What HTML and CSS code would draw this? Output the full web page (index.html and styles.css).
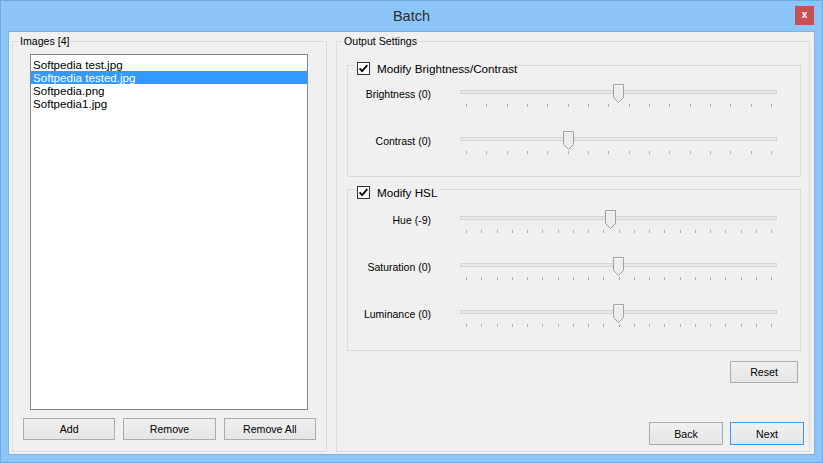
FILE: index.html
```html
<!DOCTYPE html>
<html>
<head>
<meta charset="utf-8">
<title>Batch</title>
<link rel="stylesheet" href="styles.css">
</head>
<body>
<div class="window">
  <div class="titlebar">
    <div class="title">Batch</div>
    <div class="close">x</div>
  </div>
  <div class="client">
    <section class="group images">
      <div class="group-title">Images [4]</div>
      <div class="listbox">
        <div class="item">Softpedia test.jpg</div>
        <div class="item sel">Softpedia tested.jpg</div>
        <div class="item">Softpedia.png</div>
        <div class="item">Softpedia1.jpg</div>
      </div>
      <div class="btnrow">
        <button class="btn">Add</button>
        <button class="btn">Remove</button>
        <button class="btn">Remove All</button>
      </div>
    </section>
    <section class="group output">
      <div class="group-title">Output Settings</div>

      <div class="box bc">
        <div class="box-title">
          <svg class="check" viewBox="0 0 13 13"><rect x="0.5" y="0.5" width="12" height="12" fill="#fff" stroke="#333"/><path d="M2.6 6.4L5.1 9.2L10.3 3.2" fill="none" stroke="#000" stroke-width="1.8"/></svg>
          <span>Modify Brightness/Contrast</span>
        </div>
        <div class="row">
          <div class="label">Brightness (0)</div>
          <div class="slider">
            <div class="track"></div>
            <div class="ticks"><span></span><span></span><span></span><span></span><span></span><span></span><span></span><span></span><span></span><span></span><span></span><span></span><span></span><span></span><span></span><span></span></div>
            <svg class="thumb" style="left:153px" viewBox="0 0 11 19"><path d="M0.5 0.5H10.5V13.5L5.5 18.5L0.5 13.5Z" fill="#ececec" stroke="#a0a0a0"/><path d="M1.5 1.5H9.5" stroke="#fafafa"/></svg>
          </div>
        </div>
        <div class="row">
          <div class="label">Contrast (0)</div>
          <div class="slider">
            <div class="track"></div>
            <div class="ticks"><span></span><span></span><span></span><span></span><span></span><span></span><span></span><span></span><span></span><span></span><span></span><span></span><span></span><span></span><span></span><span></span></div>
            <svg class="thumb" style="left:103px" viewBox="0 0 11 19"><path d="M0.5 0.5H10.5V13.5L5.5 18.5L0.5 13.5Z" fill="#ececec" stroke="#a0a0a0"/><path d="M1.5 1.5H9.5" stroke="#fafafa"/></svg>
          </div>
        </div>
      </div>

      <div class="box hsl">
        <div class="box-title">
          <svg class="check" viewBox="0 0 13 13"><rect x="0.5" y="0.5" width="12" height="12" fill="#fff" stroke="#333"/><path d="M2.6 6.4L5.1 9.2L10.3 3.2" fill="none" stroke="#000" stroke-width="1.8"/></svg>
          <span>Modify HSL</span>
        </div>
        <div class="row">
          <div class="label">Hue (-9)</div>
          <div class="slider">
            <div class="track"></div>
            <div class="ticks"><span></span><span></span><span></span><span></span><span></span><span></span><span></span><span></span><span></span><span></span><span></span><span></span><span></span><span></span><span></span><span></span><span></span><span></span><span></span><span></span><span></span></div>
            <svg class="thumb" style="left:145px" viewBox="0 0 11 19"><path d="M0.5 0.5H10.5V13.5L5.5 18.5L0.5 13.5Z" fill="#ececec" stroke="#a0a0a0"/><path d="M1.5 1.5H9.5" stroke="#fafafa"/></svg>
          </div>
        </div>
        <div class="row">
          <div class="label">Saturation (0)</div>
          <div class="slider">
            <div class="track"></div>
            <div class="ticks"><span></span><span></span><span></span><span></span><span></span><span></span><span></span><span></span><span></span><span></span><span></span><span></span><span></span><span></span><span></span><span></span><span></span><span></span><span></span><span></span><span></span></div>
            <svg class="thumb" style="left:153px" viewBox="0 0 11 19"><path d="M0.5 0.5H10.5V13.5L5.5 18.5L0.5 13.5Z" fill="#ececec" stroke="#a0a0a0"/><path d="M1.5 1.5H9.5" stroke="#fafafa"/></svg>
          </div>
        </div>
        <div class="row">
          <div class="label">Luminance (0)</div>
          <div class="slider">
            <div class="track"></div>
            <div class="ticks"><span></span><span></span><span></span><span></span><span></span><span></span><span></span><span></span><span></span><span></span><span></span><span></span><span></span><span></span><span></span><span></span><span></span><span></span><span></span><span></span><span></span></div>
            <svg class="thumb" style="left:153px" viewBox="0 0 11 19"><path d="M0.5 0.5H10.5V13.5L5.5 18.5L0.5 13.5Z" fill="#ececec" stroke="#a0a0a0"/><path d="M1.5 1.5H9.5" stroke="#fafafa"/></svg>
          </div>
        </div>
      </div>

      <button class="btn reset">Reset</button>

      <div class="navrow">
        <button class="btn nav">Back</button>
        <button class="btn nav default">Next</button>
      </div>
    </section>
  </div>
</div>
</body>
</html>
```
FILE: styles.css
```css
* { box-sizing: border-box; }

body {
  margin: 0;
  background: #8cc6f8;
}

.window {
  width: 823px;
  height: 463px;
  border: 1px solid #6fa9df;
  background: #8cc6f8;
  display: flex;
  flex-direction: column;
  font-family: "Liberation Sans", Arial, sans-serif;
  color: #000;
}

.titlebar {
  height: 30px;
  flex: none;
  display: grid;
  grid-template-columns: 1fr auto 1fr;
}

.title {
  grid-column: 2;
  font-size: 14.5px;
  line-height: 30px;
  color: #2e2e2e;
}

.close {
  grid-column: 3;
  justify-self: end;
  margin: 5px 8px 0 0;
  width: 19px;
  height: 19px;
  background: #c75050;
  color: #fff;
  font-weight: bold;
  font-size: 10px;
  line-height: 17px;
  text-align: center;
}

.client {
  flex: 1;
  margin: 0 7px 7px;
  border: 1px solid #7db3e4;
  background: #f0f0f0;
  display: grid;
  grid-template-columns: 315px 474px;
  column-gap: 9px;
  padding: 9px 4px 2px 3px;
}

.group {
  border: 1px solid #dcdcdc;
  position: relative;
}

.group-title {
  position: absolute;
  top: -7px;
  left: 6px;
  padding: 0 1px;
  background: #f0f0f0;
  font-size: 10.6px;
  line-height: 13px;
}

.images {
  display: flex;
  flex-direction: column;
  padding: 12px 0 11px;
}

.listbox {
  flex: 1;
  margin: 0 18px 8px 17px;
  border: 1px solid #828790;
  background: #fff;
  padding-top: 3px;
}

.item {
  height: 13px;
  line-height: 13px;
  padding-left: 2px;
  font-size: 11.6px;
  white-space: nowrap;
}

.item.sel {
  background: #3399ff;
  color: #fff;
}

.btnrow {
  display: grid;
  grid-template-columns: repeat(3, 1fr);
  column-gap: 8px;
  padding: 0 10px;
}

.btn {
  height: 22px;
  margin: 0;
  padding: 0;
  border: 1px solid #acacac;
  border-radius: 0;
  background: linear-gradient(#f0f0f0, #e5e5e5);
  font-family: "Liberation Sans", Arial, sans-serif;
  font-size: 10.6px;
  color: #000;
}

.output {
  display: flex;
  flex-direction: column;
  padding: 23px 5px 6px 10px;
}

.box {
  border: 1px solid #dcdcdc;
  position: relative;
  margin-right: 3px;
}

.bc {
  height: 112px;
  padding: 18px 0 21px;
}

.hsl {
  height: 162px;
  margin-top: 12px;
  padding: 20px 0 22px;
}

.box-title {
  position: absolute;
  top: -4px;
  left: 7px;
  height: 13px;
  padding: 0 2px;
  background: #f0f0f0;
  display: flex;
  align-items: center;
  font-size: 11.7px;
  white-space: nowrap;
}

.check {
  width: 13px;
  height: 13px;
  margin-right: 7px;
  flex: none;
}

.row {
  display: flex;
  height: 24px;
}

.row + .row {
  margin-top: 23px;
}

.label {
  width: 83px;
  flex: none;
  text-align: right;
  font-size: 10.5px;
  line-height: 21px;
  white-space: nowrap;
}

.slider {
  position: relative;
  width: 317px;
  height: 24px;
  margin-left: 29px;
}

.track {
  margin-top: 6px;
  height: 4px;
  border: 1px solid #d6d6d6;
  background: #e7e7e7;
}

.ticks {
  margin-top: 10px;
  height: 3px;
  display: flex;
  justify-content: space-between;
  padding: 0 5px 0 6px;
}

.ticks span {
  width: 1px;
  height: 3px;
  background: #b0b0b0;
}

.thumb {
  position: absolute;
  top: 0;
  width: 11px;
  height: 19px;
}

.reset {
  align-self: flex-end;
  width: 68px;
  margin: 10px 6px 0 0;
}

.navrow {
  margin-top: auto;
  align-self: flex-end;
  display: flex;
  gap: 7px;
}

.nav {
  width: 74px;
  height: 23px;
}

.nav.default {
  border-color: #3c9af0;
}
```
